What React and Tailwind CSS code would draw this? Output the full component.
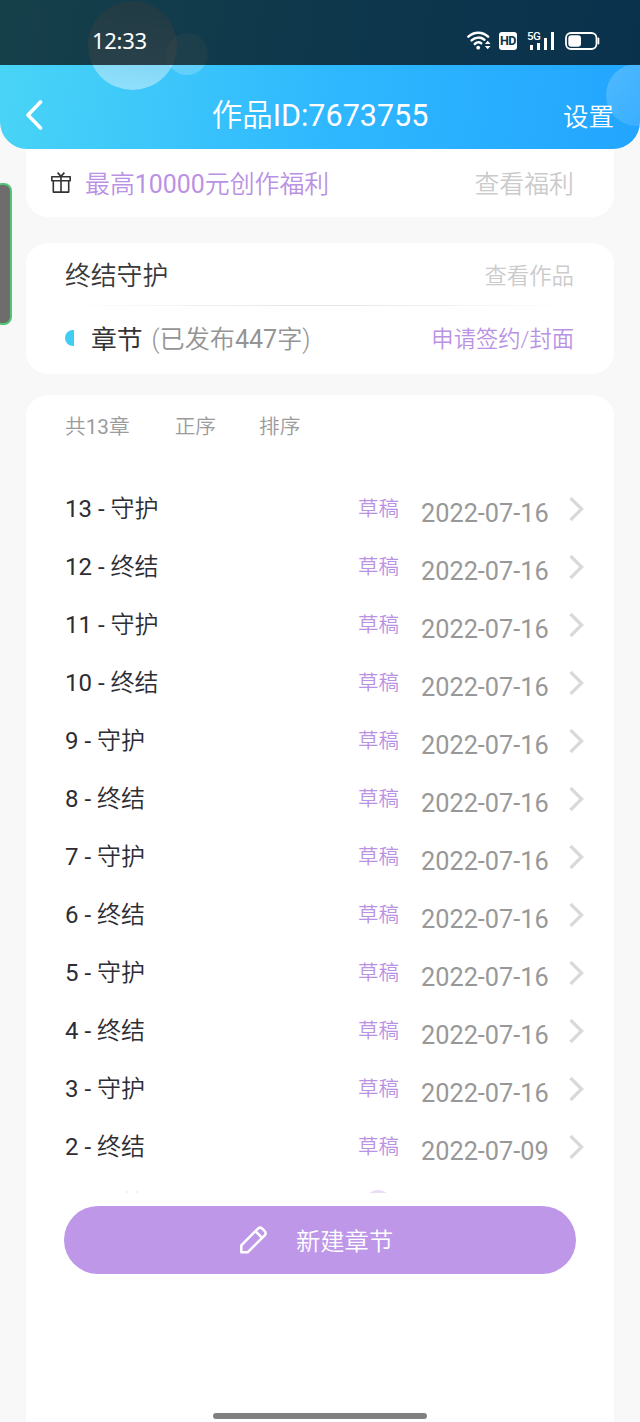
const chapters = [
  { no: 13, title: '守护', date: '2022-07-16' },
  { no: 12, title: '终结', date: '2022-07-16' },
  { no: 11, title: '守护', date: '2022-07-16' },
  { no: 10, title: '终结', date: '2022-07-16' },
  { no: 9, title: '守护', date: '2022-07-16' },
  { no: 8, title: '终结', date: '2022-07-16' },
  { no: 7, title: '守护', date: '2022-07-16' },
  { no: 6, title: '终结', date: '2022-07-16' },
  { no: 5, title: '守护', date: '2022-07-16' },
  { no: 4, title: '终结', date: '2022-07-16' },
  { no: 3, title: '守护', date: '2022-07-16' },
  { no: 2, title: '终结', date: '2022-07-09' },
];

function WifiIcon() {
  return (
    <svg width="24" height="20" viewBox="0 0 24 20" fill="none" stroke="white" strokeWidth="2.5" strokeLinecap="round">
      <path d="M1.4 5.6C7 .4 15.500 .4 21.100 5.600" />
      <path d="M4.600 9.400C8.500 5.800 13.800 5.800 17.400 8.800" />
      <path d="M7.800 13C9.800 11 12.200 10.800 14.200 12.300" />
      <circle cx="11.200" cy="16.700" r="1.900" fill="white" stroke="none" />
      <path d="M17.900 13L20.700 9.800l2.800 3.200zM17.900 15l2.800 3.200 2.800-3.200z" fill="white" stroke="none" />
    </svg>
  );
}

function SignalIcon() {
  return (
    <div className="relative h-5 w-[27px]">
      <span className="absolute left-0 top-[1px] text-[11.5px] leading-[9px] font-medium tracking-[-0.6px]">5G</span>
      <div className="absolute bottom-[1px] right-0 flex items-end gap-1">
        <i className="h-[5px] w-[3px] bg-white" />
        <i className="h-[7px] w-[3px] bg-white" />
        <i className="h-[12px] w-[3px] bg-white" />
        <i className="h-[18px] w-[3px] bg-white" />
      </div>
    </div>
  );
}

function BatteryIcon() {
  return (
    <svg width="35" height="18" viewBox="0 0 35 18" fill="none">
      <rect x="1" y="1" width="30.500" height="16" rx="5" stroke="white" strokeWidth="1.800" />
      <rect x="3.300" y="3.300" width="12.700" height="11.400" rx="3" fill="white" />
      <path d="M33.400 6.500v5" stroke="white" strokeWidth="1.800" strokeLinecap="round" />
    </svg>
  );
}

function StatusBar() {
  return (
    <div className="relative flex h-[65px] items-center justify-between bg-black/70 pt-[17px] pl-[92px] pr-[40px] text-white">
      <span className="mt-[-2px] font-['Noto_Sans'] text-[22px] leading-[46px] tracking-[-0.3px]">12:33</span>
      <div className="flex items-center">
        <WifiIcon />
        <span className="ml-[8px] flex h-[18px] w-[18px] items-center justify-center rounded-[3px] bg-white text-[12.5px] leading-none font-bold tracking-[-0.5px] text-[#0d3149]">HD</span>
        <div className="ml-[10px]"><SignalIcon /></div>
        <div className="ml-[11px]"><BatteryIcon /></div>
      </div>
    </div>
  );
}

function Header() {
  return (
    <header className="relative h-[149px] overflow-hidden rounded-b-[27px] bg-[linear-gradient(100deg,#4ad5f6_0%,#2fb8fe_52%,#22a5ff_100%)]">
      <div className="absolute left-[88px] top-[1px] h-[89px] w-[89px] rounded-full bg-[linear-gradient(180deg,rgba(255,190,180,0.25),rgba(255,255,255,0.42))]" />
      <div className="absolute left-[166px] top-[33px] h-[42px] w-[42px] rounded-full bg-white/20" />
      <div className="absolute left-[606px] top-[64px] h-[62px] w-[62px] rounded-full bg-[linear-gradient(135deg,rgba(255,255,255,0.2),rgba(255,255,255,0.08))]" />
      <StatusBar />
      <div className="relative grid h-[84px] grid-cols-[100px_1fr_100px] items-center pt-[16px] pl-[26px] pr-[26px] text-white">
        <svg width="17" height="30" viewBox="0 0 17 30" fill="none" stroke="white" strokeWidth="3.600" strokeLinecap="round" strokeLinejoin="round">
          <path d="M14.500 2L2 15l12.500 13" />
        </svg>
        <h1 className="pt-[2px] text-center text-[30.5px] leading-[40px] font-[350] whitespace-nowrap">
          作品<span className="font-normal">ID:7673755</span>
        </h1>
        <span className="pt-[4px] text-right text-[25.500px] leading-[36px] font-[350]">设置</span>
      </div>
    </header>
  );
}

function GiftIcon() {
  return (
    <svg width="20" height="22" viewBox="0 0 20 22" fill="none" stroke="#333" strokeWidth="1.600" strokeLinejoin="round">
      <path d="M.8 4.800h18.400v4H.8zM2.300 8.800h15.400v11.300H2.300zM10 4.800v15.300M6.600 .6L10 4.400l3.400-3.800" />
    </svg>
  );
}

function ChapterRow({ no, title, date }) {
  return (
    <li className="flex h-[58px] items-center pt-[2px] pl-[39px] pr-[30px]">
      <span className="flex-1 text-[24px] leading-[36px] text-[#2d2d33]">
        {no} - <span className="font-[350]">{title}</span>
      </span>
      <span className="text-[20.500px] leading-[30px] font-[350] text-[#ba92e4]">草稿</span>
      <span className="ml-[22px] w-[129px] pt-[9px] text-[25.3px] leading-[36px] whitespace-nowrap text-[#989898]">{date}</span>
      <svg className="ml-[19px]" width="15" height="26" viewBox="0 0 15 26" fill="none" stroke="#d9d9d9" strokeWidth="3.200">
        <path d="M1.500 2L12.600 13 1.500 24" />
      </svg>
    </li>
  );
}

export default function App() {
  return (
    <div className="relative flex h-[1422px] w-[640px] flex-col overflow-hidden bg-[#f8f8f8] font-[Roboto,'Noto_Sans_CJK_SC',sans-serif]">
      <Header />

      {/* edge panel handle */}
      <div className="absolute left-[-6px] top-[183px] h-[142px] w-[18px] rounded-[8px] border-2 border-[#4fc774] bg-[#6e6c6d]" />

      <section className="mx-[26px] flex h-[68px] items-center rounded-b-[22px] bg-white pl-[25px] pr-[40px]">
        <GiftIcon />
        <span className="ml-[14px] flex-1 pt-[4px] text-[24.900px] leading-[36px] font-[350] text-[#ba92e4]">
          最高<span className="font-normal">10000</span>元创作福利
        </span>
        <span className="pt-[4px] text-[24.900px] leading-[36px] font-[350] text-[#cbcbcb]">查看福利</span>
      </section>

      <section className="mx-[26px] mt-[26px] h-[131px] rounded-[22px] bg-white pl-[39px] pr-[40px]">
        <div className="flex h-[62px] items-center justify-between pt-[3px]">
          <h2 className="text-[25.8px] leading-[36px] font-[350] text-[#3a3a3a]">终结守护</h2>
          <span className="text-[22.400px] leading-[36px] font-[350] text-[#cbcbcb]">查看作品</span>
        </div>
        <div className="h-px bg-linear-to-r from-transparent via-[#e4e4e4] to-transparent" />
        <div className="flex h-[64px] items-center">
          <i className="h-4 w-[9px] rounded-l-full bg-[#3fcdf3]" />
          <span className="ml-[17px] pt-[3px] text-[25.8px] leading-[36px] text-[#333]">章节</span>
          <span className="ml-[9px] flex-1 pt-[3px] text-[25.1px] leading-[36px] font-[350] text-[#949494]">
            (已发布<span className="font-normal">447</span>字)
          </span>
          <span className="pt-[2px] text-[22.300px] leading-[36px] font-[350] text-[#ba92e4]">申请签约/封面</span>
        </div>
      </section>

      <section className="mx-[26px] mt-[21px] flex flex-1 flex-col rounded-t-[22px] bg-white">
        <div className="flex h-[84px] items-start pl-[39px] pt-[17px] text-[20.700px] leading-[30px] font-[350] text-[#9b9b9b]">
          <span>共<span className="font-normal">13</span>章</span>
          <span className="ml-[45px]">正序</span>
          <span className="ml-[43px]">排序</span>
        </div>
        <ul className="h-[714px] overflow-hidden">
          {chapters.map((c) => (
            <ChapterRow key={c.no} {...c} />
          ))}
          {/* next row, only its top edge shows */}
          <li className="flex h-[58px] items-start pl-[100px] pt-[16px]">
            <i className="h-1 w-[2px] bg-[#f2f2f2]" />
            <i className="ml-[8px] h-1 w-[2px] bg-[#f2f2f2]" />
            <i className="-mt-px ml-[226px] h-[28px] w-[28px] rounded-full bg-[#e8dcf6]" />
          </li>
        </ul>
        <button className="mx-[38px] mt-[13px] flex h-[68px] items-center rounded-full bg-[#be97e8] pl-[175px] text-white">
          <svg width="30" height="30" viewBox="0 0 30 30" fill="none" stroke="white" strokeWidth="2.500" strokeLinejoin="round">
            <path d="M2.300 27.200V20.300L19 3.600Q21.300 1.600 23.500 3.800L25.500 5.800Q27.800 8.200 25.700 10.300L8.900 27.200zM16.500 6.200L23.200 13" />
          </svg>
          <span className="ml-[27px] pt-[4px] text-[24.300px] leading-[36px] font-[350]">新建章节</span>
        </button>
      </section>

      {/* gesture bar */}
      <div className="absolute bottom-[3px] left-[213px] h-[6px] w-[214px] rounded-full bg-[#808080]" />
    </div>
  );
}
